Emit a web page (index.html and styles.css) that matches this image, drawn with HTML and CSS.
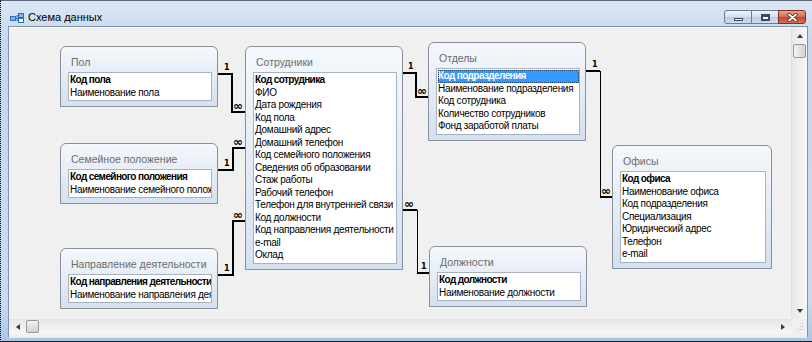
FILE: index.html
```html
<!DOCTYPE html>
<html lang="ru">
<head>
  <meta charset="UTF-8">
  <title>Схема данных</title>
  <link rel="stylesheet" href="styles.css">
</head>
<body>

  <div class="window">
    <div class="titlebar">
      <svg class="app-icon" width="14" height="10" viewBox="0 0 14 10">
        <rect x="0.5" y="3.5" width="5" height="4" fill="#7fb2e6" stroke="#2f6db5"/>
        <rect x="8.5" y="0.5" width="5" height="4" fill="#7fb2e6" stroke="#2f6db5"/>
        <rect x="8.5" y="5.5" width="5" height="4" fill="#ffffff" stroke="#2f6db5"/>
        <path d="M5.5 5.5 H7 V2.5 H8.5 M7 5.5 V7.5 H8.5" fill="none" stroke="#2f6db5"/>
      </svg>
      <span class="title">Схема данных</span>
      <div class="caption">
        <span class="cb min"><i></i></span>
        <span class="cb max"><i></i></span>
        <span class="cb close">
          <svg width="11" height="9" viewBox="0 0 11 9">
            <path d="M2 1.5 L9 7.5 M9 1.5 L2 7.5" stroke="#5a1a10" stroke-width="3.4" stroke-linecap="round"/>
            <path d="M2 1.5 L9 7.5 M9 1.5 L2 7.5" stroke="#ffffff" stroke-width="1.8" stroke-linecap="round"/>
          </svg>
        </span>
      </div>
    </div>

    <div class="client">
      <div class="main">
        <div class="canvas">

          <!-- связи между таблицами -->
          <svg class="links" width="782" height="292">
            <g fill="none" stroke="#000" stroke-width="2">
              <polyline points="209,47 223,47 223,85 236,85"/>
              <polyline points="209,143 224,143 224,121 236,121"/>
              <polyline points="209,248 224,248 224,194 236,194"/>
              <polyline points="394,46 407,46 407,70 419,70"/>
              <polyline points="577,44 591,44"/>
              <polyline points="591,170 603,170"/>
              <polyline points="394,183 408,183"/>
              <polyline points="408,246 420,246"/>
            </g>
            <g fill="none" stroke="#000" stroke-width="1">
              <line x1="591.5" y1="44" x2="591.5" y2="170"/>
              <line x1="408.5" y1="183" x2="408.5" y2="246"/>
            </g>
            <g class="mark">
              <text x="215" y="43">1</text>
              <text x="215" y="139">1</text>
              <text x="215" y="244">1</text>
              <text x="399" y="42">1</text>
              <text x="583" y="40">1</text>
              <text x="412" y="242">1</text>
              <text class="many" x="224" y="83">∞</text>
              <text class="many" x="224" y="119">∞</text>
              <text class="many" x="224" y="192">∞</text>
              <text class="many" x="408" y="68">∞</text>
              <text class="many" x="592" y="168">∞</text>
              <text class="many" x="395" y="181">∞</text>
            </g>
          </svg>

          <div class="table t-pol">
            <div class="table-name">Пол</div>
            <ul class="fields">
              <li class="key">Код пола</li>
              <li>Наименование пола</li>
            </ul>
          </div>

          <div class="table t-family">
            <div class="table-name">Семейное положение</div>
            <ul class="fields">
              <li class="key">Код семейного положения</li>
              <li>Наименование семейного положения</li>
            </ul>
          </div>

          <div class="table t-direction">
            <div class="table-name">Направление деятельности</div>
            <ul class="fields">
              <li class="key">Код направления деятельности</li>
              <li>Наименование направления деятельности</li>
            </ul>
          </div>

          <div class="table t-staff">
            <div class="table-name">Сотрудники</div>
            <ul class="fields">
              <li class="key">Код сотрудника</li>
              <li>ФИО</li>
              <li>Дата рождения</li>
              <li>Код пола</li>
              <li>Домашний адрес</li>
              <li>Домашний телефон</li>
              <li>Код семейного положения</li>
              <li>Сведения об образовании</li>
              <li>Стаж работы</li>
              <li>Рабочий телефон</li>
              <li>Телефон для внутренней связи</li>
              <li>Код должности</li>
              <li>Код направления деятельности</li>
              <li>e-mail</li>
              <li>Оклад</li>
            </ul>
          </div>

          <div class="table t-dept">
            <div class="table-name">Отделы</div>
            <ul class="fields">
              <li class="key selected">Код подразделения</li>
              <li>Наименование подразделения</li>
              <li>Код сотрудника</li>
              <li>Количество сотрудников</li>
              <li>Фонд заработой платы</li>
            </ul>
          </div>

          <div class="table t-office">
            <div class="table-name">Офисы</div>
            <ul class="fields">
              <li class="key">Код офиса</li>
              <li>Наименование офиса</li>
              <li>Код подразделения</li>
              <li>Специализация</li>
              <li>Юридический адрес</li>
              <li>Телефон</li>
              <li>e-mail</li>
            </ul>
          </div>

          <div class="table t-post">
            <div class="table-name">Должности</div>
            <ul class="fields">
              <li class="key">Код должности</li>
              <li>Наименование должности</li>
            </ul>
          </div>

        </div>

        <div class="vscroll">
          <div class="sb-btn"><i class="arr up"></i></div>
          <div class="thumb-v"></div>
          <div class="track"></div>
          <div class="sb-btn"><i class="arr down"></i></div>
        </div>
      </div>

      <div class="hrow">
        <div class="hscroll">
          <div class="sb-btn-h"><i class="arr left"></i></div>
          <div class="thumb-h"></div>
          <div class="track"></div>
          <div class="sb-btn-h"><i class="arr right"></i></div>
        </div>
        <div class="grip">
          <svg width="16" height="15" viewBox="0 0 16 15">
            <g fill="#b5b5b5">
              <rect x="11" y="4" width="1" height="1"/>
              <rect x="9" y="7" width="1" height="1"/>
              <rect x="11" y="7" width="1" height="1"/>
              <rect x="7" y="10" width="1" height="1"/>
              <rect x="9" y="10" width="1" height="1"/>
              <rect x="11" y="10" width="1" height="1"/>
            </g>
          </svg>
        </div>
      </div>
    </div>
  </div>

</body>
</html>
```

FILE: styles.css
```css
* {
  box-sizing: border-box;
}

body {
  margin: 0;
  font-family: 'Liberation Sans', Arial, sans-serif;
  background: #c9daee;
  overflow: hidden;
}

/* окно */
.window {
  width: 812px;
  height: 342px;
  border-left: 1px dotted #000;
  border-top: 1px solid #5f6772;
  border-bottom: 1px solid #1c1c1c;
  background: linear-gradient(#dbe7f4, #c5d8ee 40px, #c9dbf0 300px, #a9c6e6);
  display: flex;
  flex-direction: column;
}

.titlebar {
  height: 25px;
  flex: none;
  display: flex;
  align-items: flex-start;
  padding: 8px 6px 0 9px;
}

.app-icon {
  margin: 4px 4px 0 0;
}

.title {
  font-size: 11px;
  line-height: 16px;
  color: #000;
}

.caption {
  margin-left: auto;
  margin-top: 1px;
  display: flex;
}

.cb {
  width: 28px;
  height: 14px;
  border: 1px solid #6a7c96;
  margin-left: -1px;
  display: flex;
  justify-content: center;
  align-items: center;
  background: linear-gradient(#eef3f9, #d3dfed 50%, #bccde2 51%, #cfdcec);
}

.cb.min {
  border-radius: 3px 0 0 3px;
}

.cb.min i {
  width: 9px;
  height: 3px;
  margin-top: 4px;
  background: #fff;
  border: 1px solid #3b4a61;
}

.cb.max i {
  width: 9px;
  height: 7px;
  background: #fff;
  border: 1px solid #3b4a61;
  box-shadow: inset 0 0 0 1px #3b4a61;
  border-top-width: 2px;
}

.cb.close {
  border-color: #80311f;
  border-radius: 0 3px 3px 0;
  background: linear-gradient(#eaa08d, #d46a52 50%, #c3452c 51%, #d87157);
}

/* клиентская область */
.client {
  flex: 1;
  margin: 0 4px 3px 7px;
  border: 1px solid #8293a8;
  border-bottom-color: #e5ebf2;
  background: #f0f0f0;
  display: flex;
  flex-direction: column;
  padding-bottom: 3px;
}

.main {
  height: 292px;
  display: flex;
}

.canvas {
  flex: 1;
  position: relative;
  overflow: hidden;
  border-top: 1px solid #ffffff;
}

.links {
  position: absolute;
  top: -1px;
  left: 0;
}

.mark text {
  font-family: 'DejaVu Sans', sans-serif;
  font-size: 8px;
  font-weight: bold;
  fill: #000;
}

.mark text.many {
  font-size: 12px;
}

/* таблицы схемы */
.table {
  position: absolute;
  width: 158px;
  border: 1px solid #8a9099;
  border-radius: 6px 6px 0 0;
  background: linear-gradient(#f5f8fc, #d3e0ef);
  padding: 0 5px 5px 7px;
}

.table-name {
  height: 25px;
  padding: 8px 0 0 3px;
  font-size: 10.5px;
  line-height: 14px;
  color: #6b6b6b;
  white-space: nowrap;
  overflow: hidden;
}

.fields {
  list-style: none;
  margin: 0;
  padding: 1px 0 1px 1px;
  background: #fff;
  border: 1px solid #a7b2c0;
  font-size: 10px;
  letter-spacing: -0.3px;
  line-height: 12.5px;
  white-space: nowrap;
  overflow: hidden;
  color: #000;
}

.fields .key {
  font-weight: bold;
  letter-spacing: -0.6px;
}

.fields .selected {
  background: #3399ff;
  color: #fff;
  outline: 1px dotted #1d3f6e;
  outline-offset: -1px;
}

.t-pol { left: 51px; top: 18px; }
.t-family { left: 51px; top: 115px; }
.t-direction { left: 51px; top: 220px; }
.t-staff { left: 236px; top: 18px; }
.t-dept { left: 419px; top: 14px; }
.t-office { left: 603px; top: 117px; width: 160px; }
.t-post { left: 420px; top: 218px; }

/* полосы прокрутки */
.vscroll {
  width: 16px;
  display: flex;
  flex-direction: column;
  background: linear-gradient(90deg, #e8e8e8, #f7f7f7);
  border-left: 1px solid #e2e2e2;
}

.sb-btn {
  height: 17px;
  display: flex;
  justify-content: center;
  align-items: center;
}

.thumb-v {
  height: 14px;
  margin: 0 1px;
  border: 1px solid #979797;
  border-radius: 2px;
  background: linear-gradient(90deg, #f4f4f4, #e2e2e2 50%, #d4d4d4);
}

.track {
  flex: 1;
}

.arr {
  width: 0;
  height: 0;
  border: 3px solid transparent;
}

.arr.up { border-bottom: 4px solid #3a3a3a; border-top: 0; }
.arr.down { border-top: 4px solid #3a3a3a; border-bottom: 0; }
.arr.left { border-right: 4px solid #3a3a3a; border-left: 0; }
.arr.right { border-left: 4px solid #3a3a3a; border-right: 0; }

.hrow {
  height: 15px;
  display: flex;
}

.hscroll {
  flex: 1;
  display: flex;
  background: linear-gradient(#e8e8e8, #f7f7f7);
  border-top: 1px solid #e2e2e2;
}

.sb-btn-h {
  width: 17px;
  display: flex;
  justify-content: center;
  align-items: center;
}

.thumb-h {
  width: 13px;
  margin: 0 0 1px;
  border: 1px solid #979797;
  border-radius: 2px;
  background: linear-gradient(#f4f4f4, #e2e2e2 50%, #d4d4d4);
}

.grip {
  width: 16px;
  background: #f0f0f0;
}
```
